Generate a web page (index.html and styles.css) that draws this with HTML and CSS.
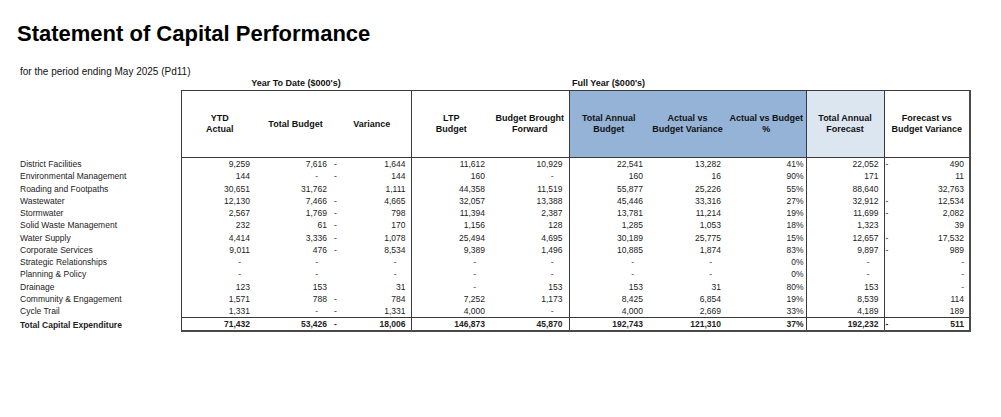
FILE: index.html
```html
<!DOCTYPE html>
<html>
<head>
<meta charset="utf-8">
<link rel="stylesheet" href="styles.css">
</head>
<body>
<div class="page">
  <h1 class="title">Statement of Capital Performance</h1>
  <p class="subtitle">for the period ending May 2025 (Pd11)</p>
  <table class="report">
    <colgroup>
      <col class="c-label"><col class="c1"><col class="c2"><col class="c3"><col class="c4"><col class="c5"><col class="c6"><col class="c7"><col class="c8"><col class="c9"><col class="c10">
    </colgroup>
    <thead>
      <tr class="group">
        <th></th>
        <th colspan="3">Year To Date ($000's)</th>
        <th colspan="5">Full Year ($000's)</th>
        <th></th><th></th>
      </tr>
      <tr class="heads">
        <th class="lbl"></th>
        <th>YTD<br>Actual</th>
        <th>Total Budget</th>
        <th>Variance</th>
        <th>LTP<br>Budget</th>
        <th>Budget Brought<br>Forward</th>
        <th class="blue">Total Annual<br>Budget</th>
        <th class="blue">Actual vs<br>Budget Variance</th>
        <th class="blue">Actual vs Budget<br>%</th>
        <th class="pale">Total Annual<br>Forecast</th>
        <th>Forecast vs<br>Budget Variance</th>
      </tr>
    </thead>
    <tbody>
      <tr><td>District Facilities</td><td>9,259</td><td>7,616</td><td><span class="m">-</span>1,644</td><td>11,612</td><td>10,929</td><td>22,541</td><td>13,282</td><td>41%</td><td>22,052</td><td><span class="m">-</span>490</td></tr>
      <tr><td>Environmental Management</td><td>144</td><td><span class="z">-</span></td><td><span class="m">-</span>144</td><td>160</td><td><span class="z">-</span></td><td>160</td><td>16</td><td>90%</td><td>171</td><td>11</td></tr>
      <tr><td>Roading and Footpaths</td><td>30,651</td><td>31,762</td><td>1,111</td><td>44,358</td><td>11,519</td><td>55,877</td><td>25,226</td><td>55%</td><td>88,640</td><td>32,763</td></tr>
      <tr><td>Wastewater</td><td>12,130</td><td>7,466</td><td><span class="m">-</span>4,665</td><td>32,057</td><td>13,388</td><td>45,446</td><td>33,316</td><td>27%</td><td>32,912</td><td><span class="m">-</span>12,534</td></tr>
      <tr><td>Stormwater</td><td>2,567</td><td>1,769</td><td><span class="m">-</span>798</td><td>11,394</td><td>2,387</td><td>13,781</td><td>11,214</td><td>19%</td><td>11,699</td><td><span class="m">-</span>2,082</td></tr>
      <tr><td>Solid Waste Management</td><td>232</td><td>61</td><td><span class="m">-</span>170</td><td>1,156</td><td>128</td><td>1,285</td><td>1,053</td><td>18%</td><td>1,323</td><td>39</td></tr>
      <tr><td>Water Supply</td><td>4,414</td><td>3,336</td><td><span class="m">-</span>1,078</td><td>25,494</td><td>4,695</td><td>30,189</td><td>25,775</td><td>15%</td><td>12,657</td><td><span class="m">-</span>17,532</td></tr>
      <tr><td>Corporate Services</td><td>9,011</td><td>476</td><td><span class="m">-</span>8,534</td><td>9,389</td><td>1,496</td><td>10,885</td><td>1,874</td><td>83%</td><td>9,897</td><td><span class="m">-</span>989</td></tr>
      <tr><td>Strategic Relationships</td><td><span class="z">-</span></td><td><span class="z">-</span></td><td><span class="z">-</span></td><td><span class="z">-</span></td><td><span class="z">-</span></td><td><span class="z">-</span></td><td><span class="z">-</span></td><td>0%</td><td><span class="z">-</span></td><td><span class="z">-</span></td></tr>
      <tr><td>Planning &amp; Policy</td><td><span class="z">-</span></td><td><span class="z">-</span></td><td><span class="z">-</span></td><td><span class="z">-</span></td><td><span class="z">-</span></td><td><span class="z">-</span></td><td><span class="z">-</span></td><td>0%</td><td><span class="z">-</span></td><td><span class="z">-</span></td></tr>
      <tr><td>Drainage</td><td>123</td><td>153</td><td>31</td><td><span class="z">-</span></td><td>153</td><td>153</td><td>31</td><td>80%</td><td>153</td><td><span class="z">-</span></td></tr>
      <tr><td>Community &amp; Engagement</td><td>1,571</td><td>788</td><td><span class="m">-</span>784</td><td>7,252</td><td>1,173</td><td>8,425</td><td>6,854</td><td>19%</td><td>8,539</td><td>114</td></tr>
      <tr><td>Cycle Trail</td><td>1,331</td><td><span class="z">-</span></td><td><span class="m">-</span>1,331</td><td>4,000</td><td><span class="z">-</span></td><td>4,000</td><td>2,669</td><td>33%</td><td>4,189</td><td>189</td></tr>
      <tr class="total"><td>Total Capital Expenditure</td><td>71,432</td><td>53,426</td><td><span class="m">-</span>18,006</td><td>146,873</td><td>45,870</td><td>192,743</td><td>121,310</td><td>37%</td><td>192,232</td><td><span class="m">-</span>511</td></tr>
    </tbody>
  </table>
</div>
</body>
</html>
```

FILE: styles.css
```css
html, body {
  margin: 0;
  padding: 0;
  background: #ffffff;
}

body {
  font-family: "Liberation Sans", Arial, sans-serif;
  color: #1e1e1e;
}

.page {
  padding-top: 21px;
}

.title {
  margin: 0;
  padding-left: 17px;
  font-size: 22px;
  line-height: 26px;
  font-weight: bold;
  color: #000;
}

.subtitle {
  margin: 19px 0 0 0;
  padding-left: 20px;
  font-size: 10px;
  line-height: 12px;
  color: #111;
}

.report {
  margin: 0 0 0 20px;
  border-collapse: collapse;
  table-layout: fixed;
  width: 950px;
  font-size: 8.5px;
}

.c-label { width: 161px; }
.c1 { width: 77px; }
.c2 { width: 75px; }
.c3 { width: 78px; }
.c4 { width: 80px; }
.c5 { width: 78px; }
.c6 { width: 79px; }
.c7 { width: 79px; }
.c8 { width: 79px; }
.c9 { width: 78px; }
.c10 { width: 86px; }

.report th,
.report td {
  padding: 0;
}

.group th {
  height: 12px;
  font-size: 9px;
  line-height: 11px;
  font-weight: bold;
  text-align: center;
  vertical-align: top;
  color: #111;
}

.heads th {
  height: 66px;
  font-size: 9px;
  line-height: 11px;
  font-weight: bold;
  text-align: center;
  vertical-align: middle;
  color: #111;
  border-top: 1px solid #3a3a3a;
  border-bottom: 1px solid #3a3a3a;
  padding: 0 1px;
  white-space: nowrap;
}

.heads th.lbl {
  border-top: none;
  border-bottom: none;
}

.heads th.blue { background: #95b3d7; }
.heads th.pale { background: #dce6f1; }

.report td {
  height: 12.25px;
  line-height: 12.25px;
  text-align: right;
  white-space: nowrap;
  color: #222;
}

.report td:first-child {
  text-align: left;
}

/* group separators */
.heads th:nth-child(2), .report td:nth-child(2),
.heads th:nth-child(5), .report td:nth-child(5),
.heads th:nth-child(7), .report td:nth-child(7),
.heads th:nth-child(10), .report td:nth-child(10),
.heads th:nth-child(11), .report td:nth-child(11) {
  border-left: 1px solid #3a3a3a;
}

.heads th:nth-child(11), .report td:nth-child(11) {
  border-right: 2px solid #4a4a4a;
}

/* per-column right padding */
.report td:nth-child(2) { padding-right: 8px; }
.report td:nth-child(3) { padding-right: 6px; }
.report td:nth-child(4) { padding-right: 5px; }
.report td:nth-child(5) { padding-right: 6px; }
.report td:nth-child(6) { padding-right: 6px; }
.report td:nth-child(7) { padding-right: 5px; }
.report td:nth-child(8) { padding-right: 6px; }
.report td:nth-child(9) { padding-right: 2px; }
.report td:nth-child(10) { padding-right: 5px; }
.report td:nth-child(11) { padding-right: 5px; }

.m {
  float: left;
  padding-left: 1px;
}

.z {
  display: inline-block;
  padding-right: 9px;
  color: #444;
}

.report td:nth-child(11) .z {
  padding-right: 0;
}

.total td {
  font-weight: bold;
  height: 12px;
  line-height: 12px;
}

.total td:not(:first-child) {
  border-top: 1px solid #3a3a3a;
  border-bottom: 2px solid #4a4a4a;
}
```
